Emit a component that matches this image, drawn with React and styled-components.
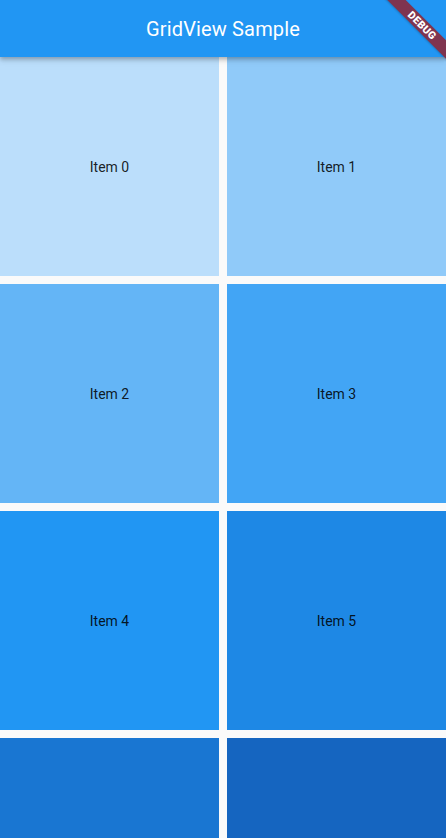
import React from "react";
import styled, { createGlobalStyle } from "styled-components";

const GlobalStyle = createGlobalStyle`
  html, body {
    margin: 0;
    padding: 0;
    background: #fafafa;
    font-family: Roboto, "Noto Sans", sans-serif;
  }
`;

const shades = [
  "#bbdefb",
  "#90caf9",
  "#64b5f6",
  "#42a5f5",
  "#2196f3",
  "#1e88e5",
  "#1976d2",
  "#1565c0",
];

const Screen = styled.div`
  position: relative;
  width: 446px;
  height: 838px;
  overflow: hidden;
  background: #fafafa;
`;

const AppBar = styled.header`
  position: relative;
  z-index: 2;
  height: 57px;
  display: flex;
  align-items: center;
  justify-content: center;
  background: #2196f3;
  box-shadow: 0 2px 4px rgba(0, 0, 0, 0.22), 0 4px 6px rgba(0, 0, 0, 0.1);
`;

const Title = styled.h1`
  margin: 0;
  color: #fff;
  font-size: 20px;
  font-weight: 400;
  letter-spacing: 0.15px;
`;

const Grid = styled.div`
  display: grid;
  grid-template-columns: repeat(2, 219px);
  grid-auto-rows: 219px;
  gap: 8px;
`;

const Tile = styled.div`
  display: flex;
  align-items: center;
  justify-content: center;
  background: ${({ $color }) => $color};
  color: rgba(0, 0, 0, 0.87);
  font-size: 14px;
`;

const Banner = styled.div`
  position: absolute;
  z-index: 3;
  top: 19px;
  right: -26px;
  width: 100px;
  height: 13px;
  transform: rotate(45deg);
  background: #7f344f;
  box-shadow: 0 1px 2px rgba(0, 0, 0, 0.2);
  color: #fff;
  font-size: 10.5px;
  font-weight: 900;
  line-height: 13px;
  text-align: center;
  letter-spacing: 0.3px;
`;

const App = () => (
  <Screen>
    <GlobalStyle />
    <AppBar>
      <Title>GridView Sample</Title>
    </AppBar>
    <Grid>
      {shades.map((color, i) => (
        <Tile key={color} $color={color}>
          Item {i}
        </Tile>
      ))}
    </Grid>
    <Banner>DEBUG</Banner>
  </Screen>
);

export default App;
